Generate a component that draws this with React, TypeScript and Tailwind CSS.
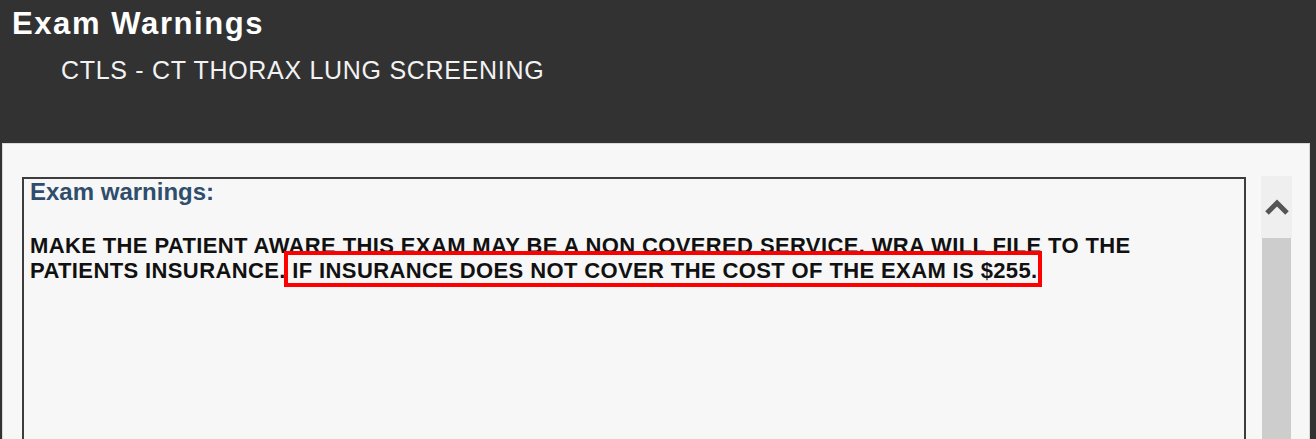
export default function App() {
  return (
    <div className="w-[1316px] h-[439px] overflow-hidden bg-[#323232] flex flex-col font-['Liberation_Sans',Arial,sans-serif]">
      {/* header */}
      <div className="h-[143px] shrink-0 pl-[12px] pt-[8px]">
        <h1 className="text-[31px] leading-[31px] font-bold text-white tracking-[1.6px]">Exam Warnings</h1>
        <div className="mt-[19px] pl-[49px] text-[25px] leading-[25px] text-[#f2f2f2] tracking-[0.7px]">
          CTLS - CT THORAX LUNG SCREENING
        </div>
      </div>

      {/* panel */}
      <div className="flex-1 ml-[2px] mr-[6px] bg-[#f7f7f7] border border-[#d9d9d9] flex items-start">
        <div className="ml-[19px] mt-[33px] w-[1224px] h-[300px] border-2 border-[#3d3d3d] pl-[6px]">
          <div className="text-[24px] leading-[26px] font-bold text-[#2f4d6c]">Exam warnings:</div>
          <p className="mt-[28px] text-[22px] leading-[25px] font-bold text-[#111] tracking-[0.38px]">
            MAKE THE PATIENT AWARE THIS EXAM MAY BE A NON COVERED SERVICE. WRA WILL FILE TO THE
            <br />
            PATIENTS INSURANCE.{" "}
            <span className="relative">
              IF INSURANCE DOES NOT COVER THE COST OF THE EXAM IS $255.
              <span className="absolute -left-[8px] -right-[4px] -top-[7px] -bottom-[4px] border-4 border-[#ff0000] pointer-events-none" />
            </span>
          </p>
        </div>

        {/* scrollbar */}
        <div className="ml-[15px] mt-[32px] w-[31px] flex flex-col">
          <div className="h-[62px] bg-[#efefef] flex items-center justify-center">
            <svg width="26" height="18" viewBox="0 0 26 18">
              <polyline points="3,15 13,5 23,15" fill="none" stroke="#555" strokeWidth="5" strokeLinejoin="miter" />
            </svg>
          </div>
          <div className="mx-[1px] h-[220px] bg-[#cdcdcd]" />
        </div>
      </div>
    </div>
  );
}
